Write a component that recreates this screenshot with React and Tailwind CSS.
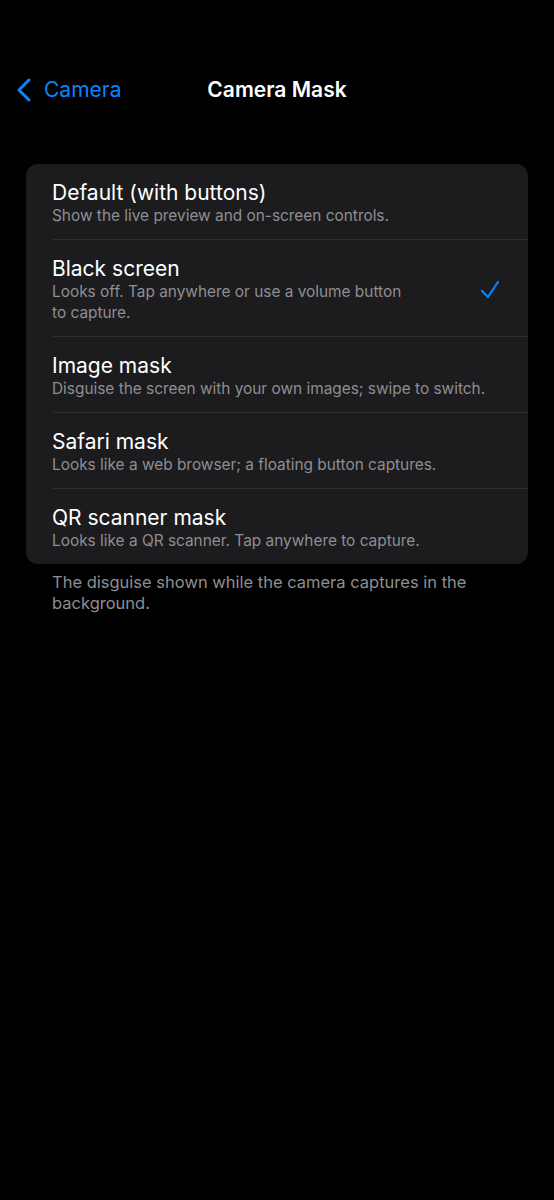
import React from "react";

const rows = [
  { title: "Default (with buttons)", sub: "Show the live preview and on-screen controls." },
  { title: "Black screen", sub: "Looks off. Tap anywhere or use a volume button to capture.", checked: true },
  { title: "Image mask", sub: "Disguise the screen with your own images; swipe to switch." },
  { title: "Safari mask", sub: "Looks like a web browser; a floating button captures." },
  { title: "QR scanner mask", sub: "Looks like a QR scanner. Tap anywhere to capture." },
];

export default function App() {
  return (
    <div className="min-h-[1200px] w-full bg-black text-white" style={{ fontFamily: "Inter, 'Noto Sans', sans-serif" }}>
      <div className="h-[64px]" />
      <div className="relative flex h-[52px] items-center">
        <div className="flex items-center pl-[15px] text-[#0a84ff]">
          <svg width="18" height="24" viewBox="0 0 18 24" fill="none">
            <path d="M14 2 L4 12 L14 22" stroke="#0a84ff" strokeWidth="3" strokeLinecap="round" strokeLinejoin="round" />
          </svg>
          <span className="ml-[11px] text-[21px]">Camera</span>
        </div>
        <div className="absolute left-0 right-0 text-center text-[21px] font-semibold">Camera Mask</div>
      </div>
      <div className="h-[48px]" />
      <div className="mx-[26px] overflow-hidden rounded-[12px] bg-[#1c1c1e]">
        {rows.map((r, i) => (
          <div key={i} className="flex items-center pl-[26px]">
            <div className={`flex flex-1 items-center pr-[26px] pt-[17px] pb-[13px] ${i > 0 ? "border-t border-[#2e2e30]" : ""}`}>
              <div className="flex-1">
                <div className="text-[21px] leading-[24px] text-white">{r.title}</div>
                <div className={`text-[15.4px] leading-[21px] text-[#8e8e93] ${r.checked ? "max-w-[356px]" : ""}`}>{r.sub}</div>
              </div>
              {r.checked && (
                <svg width="22" height="22" viewBox="0 0 22 22" fill="none" className="mr-[1px]">
                  <path d="M3 12 L9 18 L19 3" stroke="#0a84ff" strokeWidth="2.2" strokeLinecap="round" strokeLinejoin="round" />
                </svg>
              )}
            </div>
          </div>
        ))}
      </div>
      <div className="px-[52px] pt-[8px] text-[16.5px] leading-[21px] text-[#8e8e93]">
        The disguise shown while the camera captures in the background.
      </div>
    </div>
  );
}
